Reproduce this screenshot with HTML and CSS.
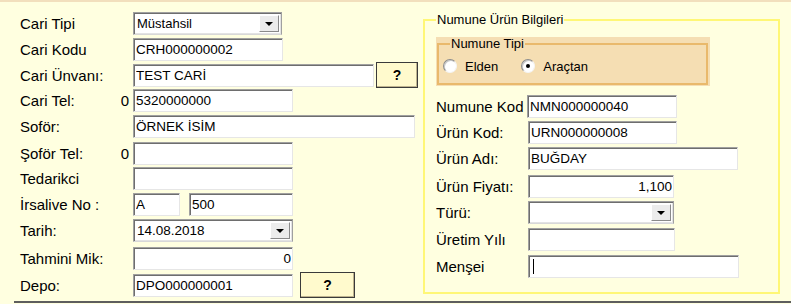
FILE: index.html
```html
<!DOCTYPE html>
<html lang="tr">

<head>
    <meta charset="UTF-8">
    <meta name="viewport" content="width=device-width, initial-scale=1.0">
    <title>Numune Kabul</title>
    <link rel="stylesheet" href="styles.css">
</head>

<body>
    <div class="form">
        <!-- Cari bilgileri -->
        <div class="cari">
            <label class="lbl">Cari Tipi</label>
            <div class="fld">
                <div class="combo w149"><span class="val small">Müstahsil</span><span class="drop"></span></div>
            </div>

            <label class="lbl">Cari Kodu</label>
            <div class="fld"><input class="box w150" type="text" value="CRH000000002"></div>

            <label class="lbl">Cari Ünvanı:</label>
            <div class="fld">
                <input class="box w241" type="text" value="TEST CARİ">
                <button class="ask gap2 w42">?</button>
            </div>

            <label class="lbl">Cari Tel: <span class="zero">0</span></label>
            <div class="fld"><input class="box w160" type="text" value="5320000000"></div>

            <label class="lbl">Soför:</label>
            <div class="fld"><input class="box w282" type="text" value="ÖRNEK İSİM"></div>

            <label class="lbl">Şoför Tel: <span class="zero">0</span></label>
            <div class="fld"><input class="box w160" type="text" value=""></div>

            <label class="lbl">Tedarikci</label>
            <div class="fld"><input class="box w160" type="text" value=""></div>

            <label class="lbl">İrsalive No :</label>
            <div class="fld">
                <input class="box w47" type="text" value="A">
                <input class="box w104 gap9" type="text" value="500">
            </div>

            <label class="lbl">Tarih:</label>
            <div class="fld">
                <div class="combo w160"><span class="val">14.08.2018</span><span class="drop"></span></div>
            </div>

            <label class="lbl">Tahmini Mik:</label>
            <div class="fld"><input class="box w160 num" type="text" value="0"></div>

            <label class="lbl">Depo:</label>
            <div class="fld">
                <input class="box w160" type="text" value="DPO000000001">
                <button class="ask gap7 w55">?</button>
            </div>
        </div>

        <!-- Numune urun bilgileri -->
        <fieldset class="numune">
            <legend>Numune Ürün Bilgileri</legend>

            <div class="tipi-panel">
                <fieldset class="tipi">
                    <legend>Numune Tipi</legend>
                    <div class="radios">
                        <label class="radio"><span class="dot"></span>Elden</label>
                        <label class="radio"><span class="dot checked"></span>Araçtan</label>
                    </div>
                </fieldset>
            </div>

            <div class="urun">
                <label class="lbl">Numune Kod</label>
                <div class="fld"><input class="box w150 pull" type="text" value="NMN000000040"></div>

                <label class="lbl">Ürün Kod:</label>
                <div class="fld"><input class="box w149" type="text" value="URN000000008"></div>

                <label class="lbl">Ürün Adı:</label>
                <div class="fld"><input class="box w210" type="text" value="BUĞDAY"></div>

                <label class="lbl">Ürün Fiyatı:</label>
                <div class="fld"><input class="box w146 num" type="text" value="1,100"></div>

                <label class="lbl">Türü:</label>
                <div class="fld">
                    <div class="combo w146"><span class="val"></span><span class="drop"></span></div>
                </div>

                <label class="lbl">Üretim Yılı</label>
                <div class="fld"><input class="box w147" type="text" value=""></div>

                <label class="lbl">Menşei</label>
                <div class="fld">
                    <div class="box w211"><span class="caret"></span></div>
                </div>
            </div>
        </fieldset>
    </div>
    <div class="rule"></div>
</body>

</html>
```

FILE: styles.css
```css
* {
    box-sizing: border-box;
    margin: 0;
    padding: 0;
}

body {
    width: 791px;
    height: 304px;
    overflow: hidden;
    background-color: #ffffe0;
    font-family: "Liberation Sans", Arial, sans-serif;
    color: #000;
}

.form {
    display: flex;
    height: 301px;
    border-top: 2px solid #f2dfbd;
}

/* left column */
.cari {
    width: 423px;
    flex: none;
    display: grid;
    grid-template-columns: 113px 1fr;
    grid-template-rows: 26px 26px 25px 26px 27px 25px 26px 26px 28px 27px 23px;
    align-items: start;
    padding: 10px 0 0 20px;
}

.lbl {
    display: flex;
    justify-content: space-between;
    font-size: 15px;
    line-height: 23px;
    height: 23px;
    white-space: nowrap;
}

.zero {
    padding-right: 4px;
}

.fld {
    display: flex;
    align-items: flex-start;
}

.box {
    display: block;
    height: 23px;
    padding: 0 2px;
    background-color: #fff;
    border: 1px solid;
    border-color: #a0a0a0 #e6e6e6 #e6e6e6 #a0a0a0;
    box-shadow: inset 1px 1px 0 #6e6e6e;
    font-family: inherit;
    font-size: 13.5px;
    color: #000;
    outline: none;
}

.box.num {
    text-align: right;
    padding-right: 1px;
}

.caret {
    display: block;
    width: 1px;
    height: 15px;
    margin: 3px 0 0 2px;
    background-color: #000;
}

.combo {
    display: flex;
    height: 23px;
    background-color: #fff;
    border: 1px solid;
    border-color: #a0a0a0 #a0a0a0 #d8d8d8 #a0a0a0;
    box-shadow: inset 1px 1px 0 #6e6e6e, inset -1px -1px 0 #e3e3e3;
}

.combo .val {
    flex: 1;
    padding-left: 3px;
    font-size: 13.5px;
    line-height: 21px;
}

.combo .val.small {
    font-size: 13px;
}

.drop {
    display: flex;
    align-items: center;
    justify-content: center;
    width: 20px;
    margin: 2px 2px 2px 0;
    background-color: #ececec;
    border: 1px solid;
    border-color: #fff #8a8a8a #8a8a8a #fff;
}

.drop::after {
    content: "";
    border-left: 4px solid transparent;
    border-right: 4px solid transparent;
    border-top: 4px solid #000;
}

.ask {
    height: 26px;
    margin-top: -2px;
    background-color: #fffacd;
    border: 1px solid #3a3a3a;
    box-shadow: inset -1px -1px 0 #bdb38e;
    font-family: inherit;
    font-weight: bold;
    font-size: 14px;
    color: #000;
}

.w42 { width: 42px; }
.w47 { width: 47px; }
.w55 { width: 55px; }
.w104 { width: 104px; }
.w146 { width: 146px; }
.w147 { width: 147px; }
.w149 { width: 149px; }
.w150 { width: 150px; }
.w160 { width: 160px; }
.w210 { width: 210px; }
.w211 { width: 211px; }
.w241 { width: 241px; }
.w282 { width: 282px; }

.gap2 { margin-left: 2px; }
.gap7 { margin-left: 7px; }
.gap9 { margin-left: 9px; }
.pull { margin-left: -1px; }

/* right group box */
.numune {
    width: 357px;
    height: 281px;
    flex: none;
    margin-top: 11px;
    padding: 10px 0 0 11px;
    border: 2px solid #fff776;
}

.numune > legend,
.tipi > legend {
    font-size: 13px;
    line-height: 14px;
    padding: 0 1px;
}

.tipi-panel {
    width: 274px;
    height: 49px;
    padding: 0 2px 1px 1px;
    background-color: #f5deb3;
}

.tipi {
    height: 48px;
    padding: 0;
    border: 2px solid #e9b96c;
}

.tipi > legend {
    margin-left: 11px;
}

.radios {
    display: flex;
    align-items: center;
    height: 30px;
    padding-left: 4px;
    font-size: 13px;
}

.radio {
    display: flex;
    align-items: center;
    margin-right: 23px;
}

.dot {
    display: flex;
    align-items: center;
    justify-content: center;
    width: 14px;
    height: 14px;
    margin-right: 8px;
    border-radius: 50%;
    background-color: #fff;
    border: 1px solid;
    border-color: #8c8c8c #f4f4f4 #f4f4f4 #8c8c8c;
    box-shadow: inset 1px 1px 0 #c8c8c8;
}

.dot.checked::after {
    content: "";
    width: 4px;
    height: 4px;
    border-radius: 50%;
    background-color: #000;
}

.urun {
    display: grid;
    grid-template-columns: 92px 1fr;
    grid-template-rows: 26px 26px 28px 26px 27px 27px 23px;
    align-items: start;
    margin-top: 9px;
}

.urun .lbl {
    margin-left: 0;
}

/* bottom separator */
.rule {
    height: 2px;
    margin-left: 14px;
    background-color: #5e5e5e;
}
```
